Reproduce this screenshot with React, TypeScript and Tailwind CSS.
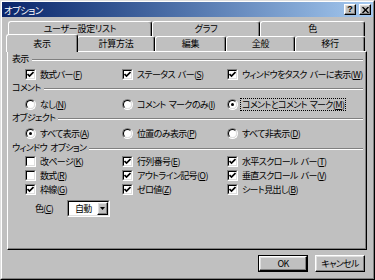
import React from "react";

const FONT = "font-['Noto_Sans_CJK_JP','Noto_Sans_CJK_SC',sans-serif] [font-feature-settings:'palt'] tracking-[-0.65px]";

function Spaced({ text }: { text: string }) {
  const parts = text.split(" ");
  return (
    <>
      {parts.map((p, i) => (
        <React.Fragment key={i}>
          {i > 0 && <span className="inline-block w-[3px]" />}
          {p}
        </React.Fragment>
      ))}
    </>
  );
}

function Acc({ text, k }: { text: string; k: string }) {
  return (
    <span className="whitespace-nowrap">
      <Spaced text={text} />(<span className="underline underline-offset-[1px]">{k}</span>)
    </span>
  );
}

function Check({ on }: { on?: boolean }) {
  return (
    <span className="flex w-[11px] h-[11px] shrink-0 border border-t-[#808080] border-l-[#808080] border-b-white border-r-white">
      <span className="flex flex-1 items-center justify-center border border-t-black border-l-black border-b-[#dfdfdf] border-r-[#dfdfdf] bg-white">
        {on && (
          <svg width="7" height="7" viewBox="0 0 7 7">
            <path d="M0.5 3 L2.5 5 L6.5 1" stroke="black" strokeWidth="1.7" fill="none" />
          </svg>
        )}
      </span>
    </span>
  );
}

function Radio({ on }: { on?: boolean }) {
  return (
    <span className="flex w-[11px] h-[11px] shrink-0 rounded-full border border-t-[#808080] border-l-[#808080] border-b-white border-r-white">
      <span className="flex flex-1 items-center justify-center rounded-full border border-t-black border-l-black border-b-[#dfdfdf] border-r-[#dfdfdf] bg-white">
        {on && <span className="w-[3px] h-[3px] rounded-full bg-black" />}
      </span>
    </span>
  );
}

function Item({ kind, on, text, k, focus }: { kind: "c" | "r"; on?: boolean; text: string; k: string; focus?: boolean }) {
  return (
    <div className="flex items-center gap-[2px]">
      {kind === "c" ? <Check on={on} /> : <Radio on={on} />}
      <span className={focus ? "border border-dotted border-black px-[1px] leading-[11px]" : "border border-transparent px-[1px] leading-[11px]"}>
        <Acc text={text} k={k} />
      </span>
    </div>
  );
}

function Header({ title, className = "" }: { title: string; className?: string }) {
  return (
    <div className={"flex items-center h-[12px] " + className}>
      <span className="whitespace-nowrap leading-[12px]">
        <Spaced text={title} />
      </span>
      <div className="flex-1 ml-[3px] mt-[2px] h-[2px] border-t border-t-[#808080] border-b border-b-white" />
    </div>
  );
}

function Row({ children, className = "" }: { children: React.ReactNode; className?: string }) {
  return <div className={"grid grid-cols-[97px_105px_1fr] items-center ml-[13px] h-[14px] " + className}>{children}</div>;
}

const raised =
  "border border-t-white border-l-white border-b-black border-r-black shadow-[inset_-1px_-1px_0_#808080,inset_1px_1px_0_#dfdfdf]";

function Tab({ label, w, selected, className = "" }: { label: string; w: number; selected?: boolean; className?: string }) {
  return (
    <div
      style={{ width: w }}
      className={
        "flex items-center justify-center bg-[#c0c0c0] rounded-t-[3px] border-t border-l border-r border-t-white border-l-white border-r-black shadow-[inset_-1px_0_0_#808080] " +
        (selected ? "relative z-10 h-[18px] -mt-[2px] " : "h-[15px] ") +
        className
      }
    >
      <span className="leading-[12px] whitespace-nowrap tracking-[-0.3px]">{label}</span>
    </div>
  );
}

export default function App() {
  return (
    <div className={"w-[375px] h-[280px] bg-[#c0c0c0] text-black text-[9px] " + FONT}>
      <div className="w-full h-full border border-t-[#dfdfdf] border-l-[#dfdfdf] border-b-black border-r-black">
        <div className="w-full h-full border border-t-white border-l-white border-b-[#808080] border-r-[#808080] flex flex-col">
          {/* Title bar */}
          <div className="h-[15px] flex items-center bg-linear-to-r from-[#0a246a] to-[#a6caf0] pl-[2px] pr-[2px]">
            <span className="text-white text-[9.5px] leading-[12px] flex-1">オプション</span>
            <div className={"w-[12px] h-[11px] bg-[#c0c0c0] flex items-center justify-center " + raised}>
              <span className="text-[9px] font-bold leading-[9px] tracking-normal font-['Liberation_Sans',sans-serif]">?</span>
            </div>
            <div className={"ml-[3px] w-[12px] h-[11px] bg-[#c0c0c0] flex items-center justify-center " + raised}>
              <svg width="7" height="6" viewBox="0 0 7 6">
                <path d="M0.5 0 L6.5 6 M6.5 0 L0.5 6" stroke="black" strokeWidth="1.4" />
              </svg>
            </div>
          </div>

          <div className="ml-[5px] w-[360px] mt-[4px] flex flex-col">
            {/* Tab row 1 */}
            <div className="flex ml-[1px] h-[15px]">
              <Tab label="ユーザー設定リスト" w={144} />
              <Tab label="グラフ" w={108} />
              <Tab label="色" w={105} />
            </div>
            {/* Tab row 2 */}
            <div className="flex ml-[1px] h-[15px] items-start">
              <Tab label="表示" w={72} selected className="-ml-[2px] -mr-[1px]" />
              <Tab label="計算方法" w={78} />
              <Tab label="編集" w={71} />
              <Tab label="全般" w={69} />
              <Tab label="移行" w={70} />
            </div>

            {/* Panel */}
            <div className="h-[199px] border-t border-l border-t-white border-l-white border-r border-b border-r-black border-b-black shadow-[inset_-1px_-1px_0_#808080] pt-[1px] pl-[4px] pr-[3px] flex flex-col">
              <Header title="表示" />
              <Row className="mt-[2px]">
                <Item kind="c" on text="数式バー" k="F" />
                <Item kind="c" on text="ステータス バー" k="S" />
                <Item kind="c" on text="ウィンドウをタスク バーに表示" k="W" />
              </Row>
              <Header title="コメント" className="mt-[1px]" />
              <Row className="mt-[3px]">
                <Item kind="r" text="なし" k="N" />
                <Item kind="r" text="コメント マークのみ" k="I" />
                <Item kind="r" on focus text="コメントとコメント マーク" k="M" />
              </Row>
              <Header title="オブジェクト" className="mt-[1px]" />
              <Row className="mt-[2px]">
                <Item kind="r" on text="すべて表示" k="A" />
                <Item kind="r" text="位置のみ表示" k="P" />
                <Item kind="r" text="すべて非表示" k="D" />
              </Row>
              <Header title="ウィンドウ オプション" className="mt-[2px]" />
              <Row>
                <Item kind="c" text="改ページ" k="K" />
                <Item kind="c" on text="行列番号" k="E" />
                <Item kind="c" on text="水平スクロール バー" k="T" />
              </Row>
              <Row>
                <Item kind="c" text="数式" k="R" />
                <Item kind="c" on text="アウトライン記号" k="O" />
                <Item kind="c" on text="垂直スクロール バー" k="V" />
              </Row>
              <Row>
                <Item kind="c" on text="枠線" k="G" />
                <Item kind="c" on text="ゼロ値" k="Z" />
                <Item kind="c" on text="シート見出し" k="B" />
              </Row>
              <div className="flex items-center mt-[4px] ml-[23px] h-[17px]">
                <span className="leading-[12px] w-[32px]">
                  <Acc text="色" k="C" />
                </span>
                <div className="flex w-[43px] h-[17px] border border-t-[#808080] border-l-[#808080] border-b-white border-r-white">
                  <div className="flex flex-1 border border-t-black border-l-black border-b-[#dfdfdf] border-r-[#dfdfdf] bg-white">
                    <div className="flex-1 flex items-center pl-[6px] leading-[12px]">自動</div>
                    <div className={"w-[11px] bg-[#c0c0c0] flex items-center justify-center " + raised}>
                      <svg width="5" height="3" viewBox="0 0 5 3">
                        <path d="M0 0 H5 L2.5 3 Z" fill="black" />
                      </svg>
                    </div>
                  </div>
                </div>
              </div>
            </div>

            {/* Buttons */}
            <div className="flex justify-end gap-[7px] mt-[5px] mr-[2px]">
              <div className="w-[50px] h-[17px] border border-black">
                <div className={"w-full h-full flex items-center justify-center " + raised}>
                  <span className="leading-[12px]">OK</span>
                </div>
              </div>
              <div className={"w-[50px] h-[17px] flex items-center justify-center " + raised}>
                <span className="leading-[12px]">キャンセル</span>
              </div>
            </div>
          </div>
        </div>
      </div>
    </div>
  );
}
